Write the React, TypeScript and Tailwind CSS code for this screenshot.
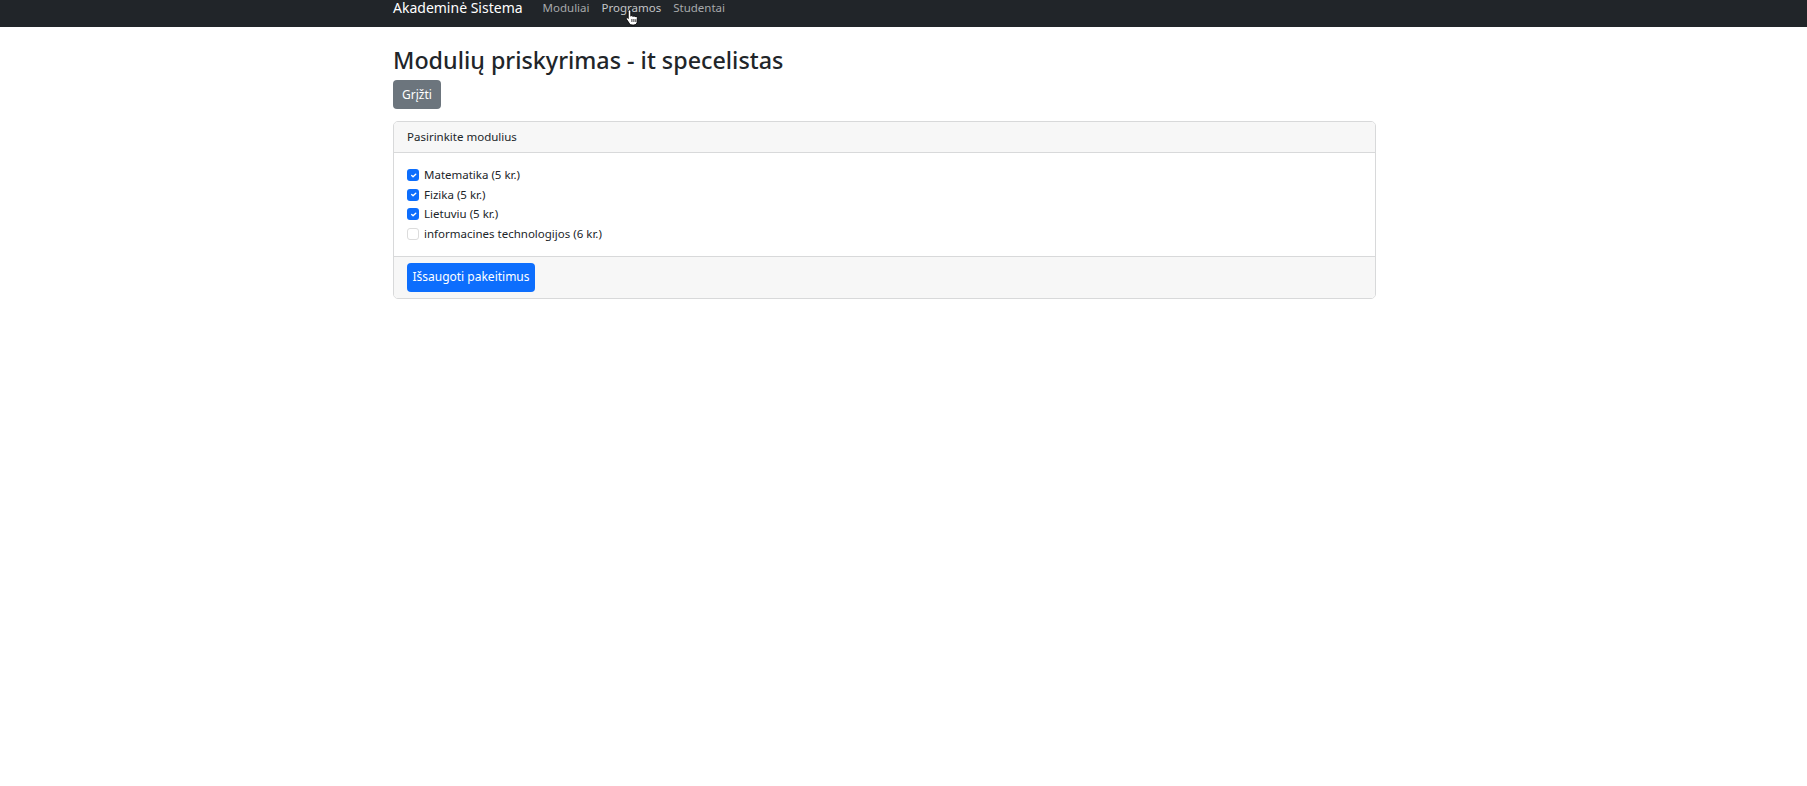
import React from "react";

const font = { fontFamily: '"Noto Sans", "Open Sans", sans-serif' };

function Check({ on }: { on: boolean }) {
  return on ? (
    <span className="flex h-[12px] w-[12px] items-center justify-center rounded-[3px] bg-[#0d6efd]">
      <svg width="9" height="9" viewBox="0 0 20 20">
        <path d="M6 10l3 3l6-6" fill="none" stroke="#fff" strokeWidth="3" strokeLinecap="round" strokeLinejoin="round" />
      </svg>
    </span>
  ) : (
    <span className="block h-[12px] w-[12px] rounded-[3px] border border-[#dcdcdc] bg-white" />
  );
}

const mods = [
  { name: "Matematika (5 kr.)", on: true },
  { name: "Fizika (5 kr.)", on: true },
  { name: "Lietuviu (5 kr.)", on: true },
  { name: "informacines technologijos (6 kr.)", on: false },
];

export default function App() {
  return (
    <div className="min-h-[786px] bg-white text-[#212529]" style={font}>
      <nav className="relative flex h-[27px] items-start bg-[#212529] pl-[393px]">
        <span className="text-[14px] leading-[15px] text-white">Akademinė Sistema</span>
        <div className="ml-[20px] flex gap-[12px] pt-[1px] text-[11.5px] leading-[13px]">
          <span className="text-[#a7a9ab]">Moduliai</span>
          <span className="text-[#c4c6c8]">Programos</span>
          <span className="text-[#a7a9ab]">Studentai</span>
        </div>
        <svg className="absolute left-[625px] top-[9px]" width="14" height="17" viewBox="0 0 14 17">
          <path
            d="M4.5 1C5.3 1 5.8 1.5 5.8 2.3V7.2C6 6.8 6.4 6.6 6.9 6.6C7.5 6.6 7.9 7 8 7.5C8.2 7.1 8.6 6.9 9.1 6.9C9.7 6.9 10.1 7.3 10.2 7.9C10.4 7.6 10.7 7.4 11.1 7.4C11.8 7.4 12.3 7.9 12.3 8.6V12C12.3 14.5 10.9 16 8.6 16H7C5.8 16 5 15.5 4.4 14.6L1.5 10.3C1.1 9.7 1.3 9 1.9 8.7C2.4 8.4 3 8.6 3.3 9.1L3.2 9.5V2.3C3.2 1.5 3.7 1 4.5 1Z"
            fill="#fff"
            stroke="#000"
            strokeWidth="0.9"
          />
          <path d="M6.9 10v3M8.9 10v3M10.8 10.2v2.8" stroke="#000" strokeWidth="0.8" />
        </svg>
      </nav>

      <main className="pl-[393px]">
        <div className="w-[983px]">
          <h2 className="mt-[19px] text-[23.3px] font-medium leading-[29px]">Modulių priskyrimas - it specelistas</h2>
          <button className="mt-[5px] flex h-[29px] w-[48px] items-center justify-center rounded-[4px] bg-[#6c757d] text-[12px] text-white">
            Grįžti
          </button>

          <div className="mt-[12px] overflow-hidden rounded-[5px] border border-[#d8d9da]">
            <div className="flex h-[31px] items-center border-b border-[#d8d9da] bg-[#f7f7f7] px-[13px] text-[11.5px]">
              Pasirinkite modulius
            </div>
            <div className="flex flex-col gap-[1.5px] px-[13px] pb-[13px] pt-[13px]">
              {mods.map((m) => (
                <label key={m.name} className="flex h-[18px] items-center gap-[5px] text-[11.5px]">
                  <Check on={m.on} />
                  <span>{m.name}</span>
                </label>
              ))}
            </div>
            <div className="border-t border-[#d8d9da] bg-[#f7f7f7] px-[13px] py-[6px]">
              <button className="flex h-[29px] w-[128px] items-center justify-center rounded-[4px] bg-[#0d6efd] text-[12px] text-white">
                Išsaugoti pakeitimus
              </button>
            </div>
          </div>
        </div>
      </main>
    </div>
  );
}
